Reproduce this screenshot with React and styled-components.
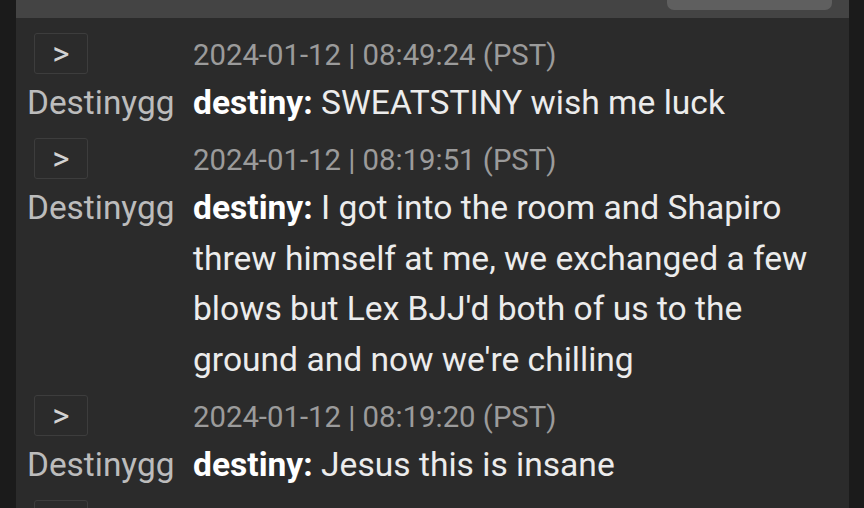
import React from 'react'
import styled, { createGlobalStyle } from 'styled-components'

const GlobalStyle = createGlobalStyle`
  html, body {
    margin: 0;
    padding: 0;
    background: #1b1b1b;
    height: 100%;
    overflow: hidden;
  }
  body {
    font-family: Roboto, "Noto Sans", sans-serif;
  }
`

const Page = styled.div`
  height: 508px;
  padding: 0 15px 0 16px;
  overflow: hidden;
`

const Panel = styled.div`
  background: #2b2b2b;
  height: 100%;
  display: flex;
  flex-direction: column;
`

const TopBar = styled.div`
  height: 18px;
  background: #444444;
  display: flex;
  justify-content: flex-end;
  padding-right: 17px;
  flex-shrink: 0;
`

const TopButton = styled.div`
  width: 165px;
  height: 10px;
  background: #5f5f5f;
  border-radius: 0 0 7px 7px;
`

const Feed = styled.div`
  padding: 10px 16px 0 0;
  display: flex;
  flex-direction: column;
  gap: 5px;
`

const Message = styled.div`
  display: grid;
  grid-template-columns: 177px 1fr;
  grid-auto-rows: auto;
`

const ExpandCell = styled.div`
  height: 50px;
  display: flex;
  align-items: center;
  padding-left: 18px;
`

const ExpandButton = styled.button`
  width: 54px;
  height: 41px;
  margin-top: 1px;
  box-sizing: border-box;
  background: transparent;
  border: 1.5px solid #3d3d3d;
  border-radius: 3px;
  color: #d2d2d2;
  font-family: Roboto, sans-serif;
  font-size: 33px;
  line-height: 1;
  padding: 0 0 1px;
  display: flex;
  align-items: center;
  justify-content: center;
`

const Stamp = styled.div`
  height: 50px;
  line-height: 54px;
  font-size: 29.3px;
  color: #9b9b9b;
`

const Author = styled.div`
  padding-left: 11px;
  font-size: 33.4px;
  line-height: 50px;
  color: #bcbcbc;
`

const Body = styled.div`
  font-size: 33.6px;
  line-height: 50.4px;
  color: #ececec;
`

const Nick = styled.span`
  font-weight: 700;
  color: #ffffff;
`

const messages = [
  { time: '2024-01-12 | 08:49:24 (PST)', text: 'SWEATSTINY wish me luck' },
  {
    time: '2024-01-12 | 08:19:51 (PST)',
    text: "I got into the room and Shapiro threw himself at me, we exchanged a few blows but Lex BJJ'd both of us to the ground and now we're chilling",
  },
  { time: '2024-01-12 | 08:19:20 (PST)', text: 'Jesus this is insane' },
  { time: '2024-01-12 | 08:18:02 (PST)', text: 'ok' },
]

const App = () => {
  return (
    <>
      <GlobalStyle />
      <Page>
        <Panel>
          <TopBar>
            <TopButton />
          </TopBar>
          <Feed>
            {messages.map((m, i) => (
              <Message key={i}>
                <ExpandCell>
                  <ExpandButton>&gt;</ExpandButton>
                </ExpandCell>
                <Stamp>{m.time}</Stamp>
                <Author>Destinygg</Author>
                <Body>
                  <Nick>destiny:</Nick> {m.text}
                </Body>
              </Message>
            ))}
          </Feed>
        </Panel>
      </Page>
    </>
  )
}

export default App
